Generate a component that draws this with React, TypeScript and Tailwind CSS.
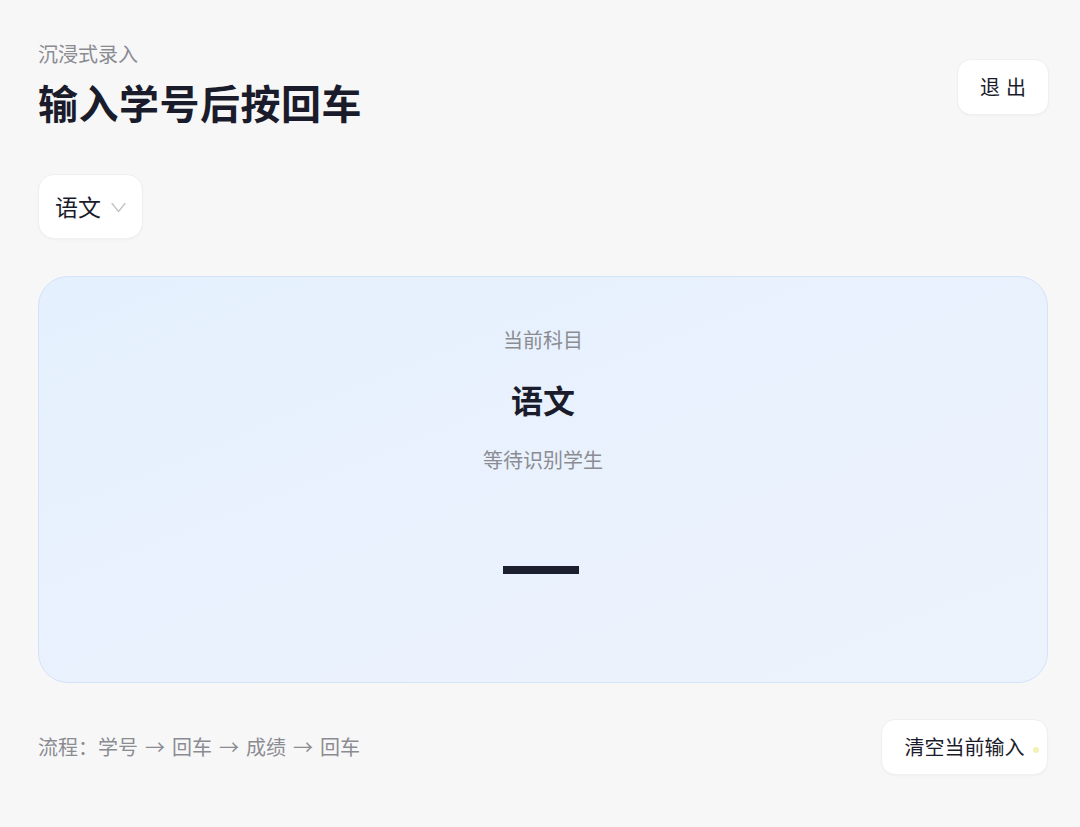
// 沉浸式录入页:科目选择 + 当前识别状态卡片 + 流程提示
export default function App() {
  const font = { fontFamily: '"Noto Sans CJK SC", "Noto Sans", sans-serif' }
  const steps = ['学号', '回车', '成绩', '回车']

  return (
    <div
      className="w-[1080px] h-[827px] bg-[#f7f7f8] pl-[38px] pr-[32px] pt-[40px] text-[#1b1c2b]"
      style={font}
    >
      {/* 头部 */}
      <div className="flex items-start justify-between">
        <div>
          <div className="text-[20px] leading-[28px] text-[#8b8c92]">沉浸式录入</div>
          <h1 className="mt-[8px] text-[40px] leading-[52px] font-bold tracking-[0.5px]">输入学号后按回车</h1>
        </div>
        <button
          type="button"
          className="mt-[19px] mr-[-1px] w-[92px] h-[56px] rounded-[14px] bg-white border border-[#efeff1] shadow-[0_1px_2px_rgba(0,0,0,0.03)] text-[20px] tracking-[6px] pl-[6px]"
        >
          退出
        </button>
      </div>

      {/* 科目选择 */}
      <button
        type="button"
        className="mt-[46px] flex items-center gap-[10px] w-[105px] h-[65px] pl-[16px] rounded-[16px] bg-white border border-[#efeff1] shadow-[0_1px_2px_rgba(0,0,0,0.03)]"
      >
        <span className="text-[23px]">语文</span>
        <svg width="15" height="11" viewBox="0 0 15 11" fill="none" className="mt-[2px]">
          <polyline points="1,1.5 7.5,9.5 14,1.5" stroke="#c2c3c8" strokeWidth="1.3" strokeLinecap="round" strokeLinejoin="round" />
        </svg>
      </button>

      {/* 当前状态卡片 */}
      <div className="mt-[37px] h-[407px] rounded-[30px] border border-[#d3e3f8] bg-gradient-to-br from-[#e5f0fe] to-[#edf3fc] flex flex-col items-center pt-[49px]">
        <div className="text-[20px] leading-[28px] text-[#8b8c92]">当前科目</div>
        <div className="mt-[25px] text-[32px] leading-[40px] font-bold">语文</div>
        <div className="mt-[27px] text-[20px] leading-[28px] text-[#8b8c92]">等待识别学生</div>
        <div className="mt-[92px] mr-[4px] w-[76px] h-[8px] bg-[#1c1f2e]" aria-label="—" />
      </div>

      {/* 底部 */}
      <div className="mt-[36px] flex items-center justify-between">
        <div className="text-[20px] text-[#8b8c92]">
          流程：
          {steps.map((s, i) => (
            <span key={i}>
              {i > 0 && <span className="mx-[7px]">→</span>}
              {s}
            </span>
          ))}
        </div>
        <button
          type="button"
          className="relative w-[167px] h-[56px] rounded-[14px] bg-white border border-[#efeff1] shadow-[0_1px_2px_rgba(0,0,0,0.03)] text-[20px]"
        >
          清空当前输入
          <span className="absolute right-[8px] top-[27px] w-[6px] h-[6px] rounded-full bg-[#f4f1b4]" />
        </button>
      </div>
    </div>
  )
}
